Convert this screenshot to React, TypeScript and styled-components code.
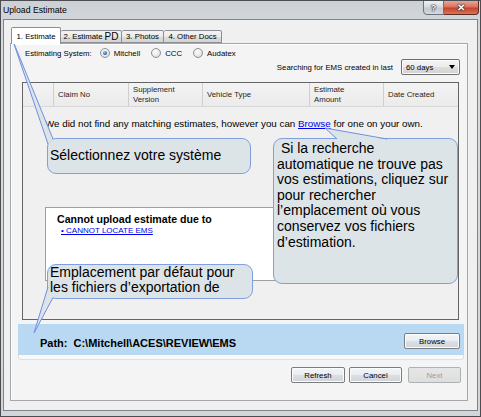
import styled, { createGlobalStyle } from "styled-components";

const GlobalStyle = createGlobalStyle`
  html, body {
    margin: 0;
    padding: 0;
    background: #ffffff;
  }
  body {
    font-family: "Liberation Sans", Arial, sans-serif;
  }
  * {
    box-sizing: border-box;
  }
`;

const Window = styled.div`
  position: relative;
  width: 481px;
  height: 417px;
  border: 1px solid #4a4e53;
  background: linear-gradient(180deg, #cdd1d5 0%, #dadde0 12%, #d3d6d9 100%);
  display: flex;
  flex-direction: column;
  font-family: "Liberation Sans", Arial, sans-serif;
  font-size: 7.8px;
  color: #000;
  overflow: hidden;
`;

const TitleBar = styled.div`
  height: 18px;
  display: flex;
  align-items: flex-start;
  padding-right: 1px;
`;

const Title = styled.div`
  flex: 1;
  font-size: 8.7px;
  padding: 4px 0 0 2px;
  color: #000;
`;

const CaptionButton = styled.div<{ $close?: boolean }>`
  width: ${(p) => (p.$close ? 35 : 21)}px;
  height: 15px;
  margin-top: -1px;
  display: flex;
  align-items: center;
  justify-content: center;
  font-weight: bold;
  font-size: ${(p) => (p.$close ? 10 : 9)}px;
  color: #fff;
  text-shadow: 0 0 1px #222, 0 0 1px #222, 0 0 2px #333;
  border: 1px solid ${(p) => (p.$close ? "#5c2c22" : "#6b737d")};
  border-radius: ${(p) => (p.$close ? "0 0 4px 0" : "0 0 0 4px")};
  border-left-width: ${(p) => (p.$close ? 0 : 1)}px;
  background: ${(p) =>
    p.$close
      ? "linear-gradient(180deg, #e8a698 0%, #d8735e 45%, #c7432a 55%, #d9745a 100%)"
      : "linear-gradient(180deg, #eef1f4 0%, #d6dbe0 45%, #c2c9d0 55%, #d4d9de 100%)"};
`;

const Client = styled.div`
  flex: 1;
  margin: 0 2px 5px 2px;
  border: 1px solid #7f848a;
  background: #f0f0f0;
  padding: 7px 9px 9px 6px;
  display: flex;
  flex-direction: column;
`;

const TabStrip = styled.div`
  position: relative;
  z-index: 1;
  height: 17px;
  margin-bottom: -1px;
  padding-left: 1px;
  display: flex;
  align-items: flex-end;
`;

const Tab = styled.div<{ $w: number; $active?: boolean }>`
  width: ${(p) => p.$w}px;
  height: ${(p) => (p.$active ? 17 : 13)}px;
  margin-bottom: ${(p) => (p.$active ? 0 : 1)}px;
  display: flex;
  align-items: ${(p) => (p.$active ? "flex-start" : "center")};
  padding-top: ${(p) => (p.$active ? 4 : 0)}px;
  justify-content: center;
  white-space: nowrap;
  border: 1px solid #8c8e94;
  border-bottom: ${(p) => (p.$active ? "none" : "1px solid #8c8e94")};
  border-left-width: ${(p) => (p.$active ? 1 : 0)}px;
  border-radius: 2px 2px 0 0;
  background: ${(p) =>
    p.$active ? "#ffffff" : "linear-gradient(180deg, #f3f3f3 0%, #ebebeb 50%, #dcdcdc 51%, #d4d4d4 100%)"};
`;

const Big = styled.span`
  font-size: 10px;
  margin-left: 2px;
`;

const TabPanel = styled.div`
  flex: 1;
  border: 1px solid #a4a8ad;
  background: #f4f4f4;
  box-shadow: inset 1px 1px 0 #ffffff;
  display: flex;
  flex-direction: column;
`;

const SystemRow = styled.div`
  margin-top: 3px;
  height: 12px;
  padding-left: 14px;
  display: flex;
  align-items: center;
  white-space: nowrap;
`;

const RadioOption = styled.label`
  display: flex;
  align-items: center;
  gap: 4px;
  margin-left: ${(p: { $gap: number }) => p.$gap}px;
`;

const Radio = styled.span<{ $checked?: boolean }>`
  width: 10px;
  height: 10px;
  border-radius: 50%;
  border: 1px solid #8f9193;
  background: radial-gradient(circle at 40% 35%, #ffffff 0%, #e6e6e6 60%, #cfcfcf 100%);
  display: flex;
  align-items: center;
  justify-content: center;
  &::after {
    content: "";
    width: 4px;
    height: 4px;
    border-radius: 50%;
    background: ${(p) =>
      p.$checked ? "radial-gradient(circle at 40% 35%, #9ccff5 0%, #2c6fb8 55%, #123e78 100%)" : "transparent"};
  }
`;

const SearchRow = styled.div`
  height: 16px;
  padding-right: 7px;
  display: flex;
  align-items: center;
  justify-content: flex-end;
  gap: 8px;
  white-space: nowrap;
`;

const Combo = styled.div`
  width: 59px;
  height: 16px;
  border: 1px solid #707070;
  border-radius: 2px;
  background: linear-gradient(180deg, #f4f4f4 0%, #ececec 50%, #dedede 51%, #d2d2d2 100%);
  box-shadow: inset 0 0 0 1px #fbfbfb;
  display: flex;
  align-items: center;
  justify-content: space-between;
  padding: 0 4px;
`;

const Arrow = styled.span`
  width: 0;
  height: 0;
  border-left: 3.5px solid transparent;
  border-right: 3.5px solid transparent;
  border-top: 4px solid #000;
`;

const Grid = styled.div`
  margin: 7px 8px 0 11px;
  height: 238px;
  border: 1px solid #646464;
  background: #f0f0f0;
  display: flex;
  flex-direction: column;
`;

const GridHeader = styled.div`
  height: 24px;
  display: grid;
  grid-template-columns: 31px 75px 74px 107px 74px 1fr;
  background: linear-gradient(180deg, #f3f3f3 0%, #ebebeb 100%);
  border-bottom: 1px solid #d8d8d8;
`;

const HeadCell = styled.div`
  display: flex;
  align-items: center;
  padding-left: 4px;
  line-height: 9.5px;
  color: #1e1e1e;
  border-right: 1px solid #cfcfcf;
  &:last-child {
    border-right: none;
  }
`;

const Message = styled.div`
  margin: 11px 0 0 22px;
  font-size: 9.8px;
  line-height: 12px;
  white-space: nowrap;
`;

const Link = styled.span<{ $size?: number }>`
  color: #0000ee;
  text-decoration: underline;
  font-size: ${(p) => p.$size ?? 9.8}px;
`;

const ErrorBox = styled.div`
  margin: 77px 21px 0 22px;
  height: 74px;
  background: #ffffff;
  border: 1px solid #a0a0a0;
  padding: 5px 0 0 11px;
`;

const ErrorTitle = styled.div`
  font-weight: bold;
  font-size: 10.6px;
  line-height: 13px;
`;

const ErrorItem = styled.div`
  margin-left: 4px;
  line-height: 10px;
  font-size: 8px;
`;

const PathPanel = styled.div`
  margin: 4px 3px 0 7px;
  height: 36px;
  border: 1px solid #e0e0e0;
  border-top: none;
  border-radius: 0 0 3px 3px;
  background: #f9f9f9;
`;

const PathBand = styled.div`
  height: 31px;
  margin: 0 -1px;
  background: #b9d8f1;
  display: flex;
  align-items: center;
  padding: 9px 4px 6px 22px;
  font-weight: bold;
  font-size: 11px;
`;

const PathText = styled.span`
  padding-top: 4px;
  margin-right: 6px;
`;

const Spacer = styled.div`
  flex: 1;
`;

const Button = styled.button<{ $w: number }>`
  width: ${(p) => p.$w}px;
  height: 16px;
  padding: 0;
  font-family: "Liberation Sans", Arial, sans-serif;
  font-size: 7.8px;
  font-weight: normal;
  color: #000;
  border: 1px solid #7a7d80;
  border-radius: 2px;
  background: linear-gradient(180deg, #f3f5f7 0%, #eaedf0 50%, #dcdfe3 51%, #d0d4d8 100%);
  box-shadow: inset 0 0 0 1px #fbfcfd;
  &:disabled {
    color: #9d9d9d;
    border-color: #adb2b5;
    background: linear-gradient(180deg, #e6e6e6 0%, #dedede 100%);
    box-shadow: none;
  }
`;

const ButtonRow = styled.div`
  margin-top: 7px;
  padding-right: 6px;
  display: flex;
  justify-content: flex-end;
  gap: 4px;
  & > button:last-child {
    margin-left: 2px;
  }
`;

const Bubble = styled.div<{ $x: number; $y: number; $w: number; $h: number; $pad: string; $lh: number }>`
  position: absolute;
  left: ${(p) => p.$x - 1}px;
  top: ${(p) => p.$y - 1}px;
  width: ${(p) => p.$w}px;
  height: ${(p) => p.$h}px;
  padding: ${(p) => p.$pad};
  background: #dde4e8;
  border: 1px solid #7f9fe2;
  border-radius: 9px;
  font-size: 14px;
  line-height: ${(p) => p.$lh}px;
  color: #000;
  white-space: pre;
`;

const Tails = styled.svg`
  position: absolute;
  left: -1px;
  top: -1px;
  width: 481px;
  height: 417px;
  pointer-events: none;
`;

const tails = [
  { fill: "13,41 48,144 53,139", line: "48,144 13,41 53,139" },
  { fill: "325,128 337,139.5 387,139.5", line: "337,139 325,128 387,139" },
  { fill: "34,333 48,287 53,297.5", line: "48,287 34,333 53,297.5" },
];

export default function App() {
  return (
    <>
      <GlobalStyle />
      <Window>
        <TitleBar>
          <Title>Upload Estimate</Title>
          <CaptionButton>?</CaptionButton>
          <CaptionButton $close>✕</CaptionButton>
        </TitleBar>
        <Client>
          <TabStrip>
            <Tab $w={50} $active>1. Estimate</Tab>
            <Tab $w={61}>
              2. Estimate<Big>PD</Big>
            </Tab>
            <Tab $w={42}>3. Photos</Tab>
            <Tab $w={58}>4. Other Docs</Tab>
          </TabStrip>
          <TabPanel>
            <SystemRow>
              Estimating System:
              <RadioOption $gap={8}>
                <Radio $checked />
                Mitchell
              </RadioOption>
              <RadioOption $gap={11}>
                <Radio />
                CCC
              </RadioOption>
              <RadioOption $gap={11}>
                <Radio />
                Audatex
              </RadioOption>
            </SystemRow>
            <SearchRow>
              Searching for EMS created in last
              <Combo>
                60 days
                <Arrow />
              </Combo>
            </SearchRow>
            <Grid>
              <GridHeader>
                <HeadCell />
                <HeadCell>Claim No</HeadCell>
                <HeadCell>
                  Supplement
                  <br />
                  Version
                </HeadCell>
                <HeadCell>Vehicle Type</HeadCell>
                <HeadCell>
                  Estimate
                  <br />
                  Amount
                </HeadCell>
                <HeadCell>Date Created</HeadCell>
              </GridHeader>
              <Message>
                We did not find any matching estimates, however you can <Link>Browse</Link> for one on your own.
              </Message>
              <ErrorBox>
                <ErrorTitle>Cannot upload estimate due to</ErrorTitle>
                <ErrorItem>
                  <Link $size={8}>• CANNOT LOCATE EMS</Link>
                </ErrorItem>
              </ErrorBox>
            </Grid>
            <PathPanel>
              <PathBand>
                <PathText>Path:</PathText>
                <PathText>C:\Mitchell\ACES\REVIEW\EMS</PathText>
                <Spacer />
                <Button $w={56}>Browse</Button>
              </PathBand>
            </PathPanel>
            <ButtonRow>
              <Button $w={54}>Refresh</Button>
              <Button $w={53}>Cancel</Button>
              <Button $w={53} disabled>
                Next
              </Button>
            </ButtonRow>
          </TabPanel>
        </Client>

        <Bubble $x={47} $y={138} $w={204} $h={36} $pad="8px 0 0 2px" $lh={16}>
          Sélectionnez votre système
        </Bubble>
        <Bubble $x={273} $y={138} $w={185} $h={146} $pad="2px 0 0 3px" $lh={15.6}>
          {" Si la recherche\nautomatique ne trouve pas\nvos estimations, cliquez sur\npour rechercher\nl’emplacement où vous\nconservez vos fichiers\nd’estimation."}
        </Bubble>
        <Bubble $x={47} $y={264} $w={206} $h={35} $pad="0 0 0 2px" $lh={15}>
          {"Emplacement par défaut pour\nles fichiers d’exportation de"}
        </Bubble>
        <Tails viewBox="0 0 481 417">
          {tails.map((t, i) => (
            <g key={i}>
              <polygon points={t.fill} fill="#dde4e8" />
              <polyline points={t.line} fill="none" stroke="#6f8fe0" strokeWidth="1" />
            </g>
          ))}
        </Tails>
      </Window>
    </>
  );
}
